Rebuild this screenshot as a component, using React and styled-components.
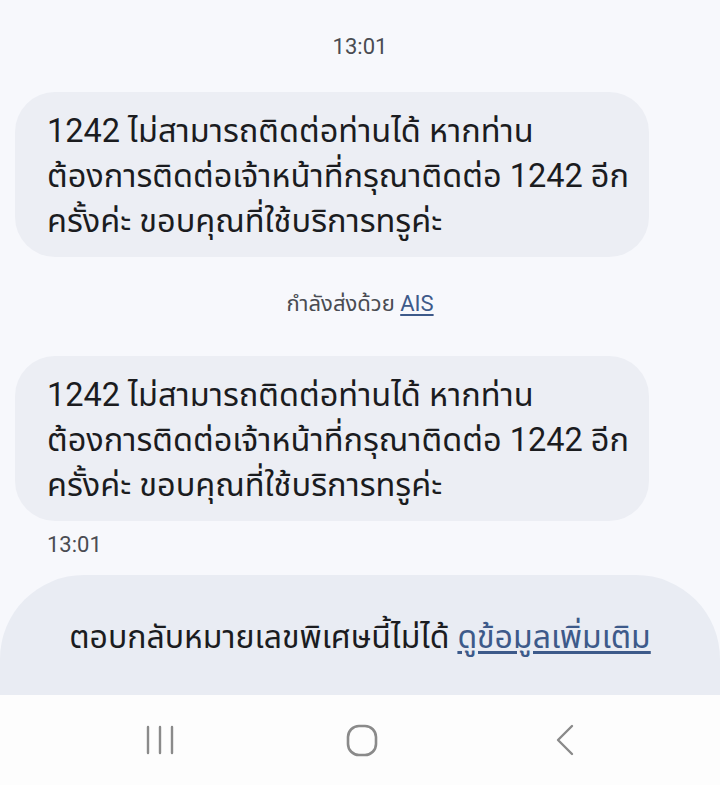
import React from "react";
import styled, { createGlobalStyle } from "styled-components";

const Global = createGlobalStyle`
  html, body { margin: 0; padding: 0; background: #f7f8fc; }
  body { font-family: Roboto, "Noto Sans Thai", "Noto Sans", sans-serif; }
`;

const Screen = styled.div`
  width: 720px;
  height: 785px;
  display: flex;
  flex-direction: column;
  background: #f7f8fc;
  overflow: hidden;
`;

const Thread = styled.div`
  flex: 1;
  display: flex;
  flex-direction: column;
  padding: 32px 0 0;
  min-height: 0;
`;

const CenterNote = styled.div`
  text-align: center;
  color: #4a4c52;
  font-size: 22px;
  line-height: 30px;
  margin-bottom: ${(p) => p.$mb || 0}px;
`;

const Bubble = styled.div`
  margin: 0 71px 0 15px;
  background: #eceef4;
  border-radius: 40px;
  padding: 17px 12px 13px 32px;
  color: #1b1c1f;
  font-size: 32.5px;
  line-height: 45px;
  white-space: nowrap;
  margin-bottom: ${(p) => p.$mb || 0}px;
`;

const Stamp = styled.div`
  padding-left: 47px;
  margin-top: 10px;
  color: #4a4c52;
  font-size: 22px;
  line-height: 28px;
`;

const Link = styled.span`
  color: #3d5a8a;
  text-decoration: underline;
  text-underline-offset: 3px;
`;

const Sheet = styled.div`
  margin-top: 16px;
  background: #e9ecf3;
  border-radius: 84px 84px 0 0;
  flex: 1;
  display: flex;
  justify-content: center;
  align-items: flex-start;
  padding-top: 40px;
  box-sizing: border-box;
  font-size: 32px;
  line-height: 44px;
  white-space: nowrap;
  color: #1b1c1f;
`;

const NavBar = styled.div`
  height: 90px;
  background: #fdfdfd;
  display: grid;
  grid-template-columns: repeat(3, 1fr);
  align-items: center;
  justify-items: center;
  padding: 0 54px 0 59px;
  flex-shrink: 0;
`;

const NavIcon = styled.svg`
  display: block;
`;

const Message = ({ mb }) => (
  <Bubble $mb={mb}>
    1242 ไม่สามารถติดต่อท่านได้ หากท่าน
    <br />
    ต้องการติดต่อเจ้าหน้าที่กรุณาติดต่อ 1242 อีก
    <br />
    ครั้งค่ะ ขอบคุณที่ใช้บริการทรูค่ะ
  </Bubble>
);

export default function App() {
  return (
    <>
      <Global />
      <Screen>
        <Thread>
          <CenterNote $mb={30}>13:01</CenterNote>
          <Message mb={32} />
          <CenterNote $mb={37}>
            กำลังส่งด้วย <Link>AIS</Link>
          </CenterNote>
          <Message />
          <Stamp>13:01</Stamp>
          <Sheet>
            <span>
              ตอบกลับหมายเลขพิเศษนี้ไม่ได้ <Link>ดูข้อมูลเพิ่มเติม</Link>
            </span>
          </Sheet>
        </Thread>
        <NavBar>
          <NavIcon width="30" height="32" viewBox="0 0 30 32">
            <g stroke="#8a8a8a" strokeWidth="2.4" strokeLinecap="round">
              <line x1="3" y1="3" x2="3" y2="29" />
              <line x1="15" y1="3" x2="15" y2="29" />
              <line x1="27" y1="3" x2="27" y2="29" />
            </g>
          </NavIcon>
          <NavIcon width="34" height="34" viewBox="0 0 34 34">
            <rect x="3" y="3" width="28" height="29" rx="11" fill="none" stroke="#8a8a8a" strokeWidth="2.6" />
          </NavIcon>
          <NavIcon width="24" height="34" viewBox="0 0 24 34">
            <polyline points="19,3 5,17 19,31" fill="none" stroke="#8a8a8a" strokeWidth="2.4" strokeLinecap="round" strokeLinejoin="round" />
          </NavIcon>
        </NavBar>
      </Screen>
    </>
  );
}
